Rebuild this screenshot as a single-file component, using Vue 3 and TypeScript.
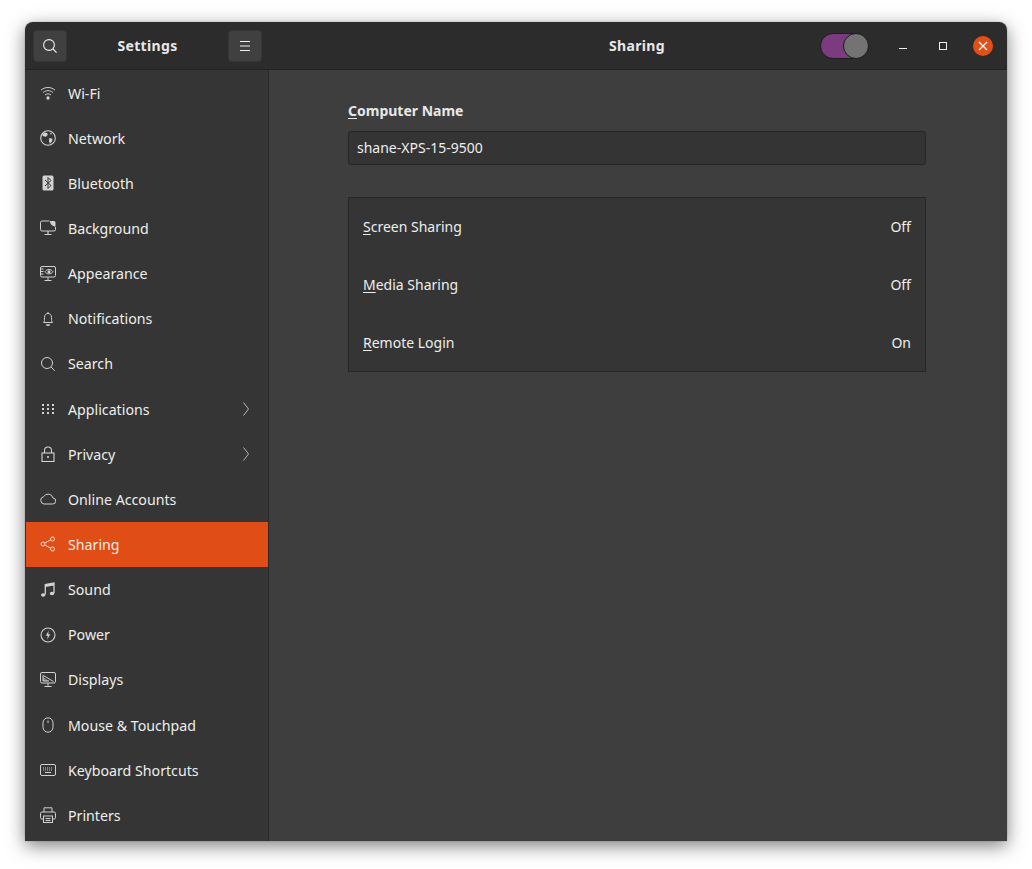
<script setup lang="ts">
interface Item { label: string; icon: string; arrow?: boolean; active?: boolean }
const items: Item[] = [
  { label: 'Wi-Fi', icon: 'wifi' },
  { label: 'Network', icon: 'network' },
  { label: 'Bluetooth', icon: 'bluetooth' },
  { label: 'Background', icon: 'background' },
  { label: 'Appearance', icon: 'appearance' },
  { label: 'Notifications', icon: 'bell' },
  { label: 'Search', icon: 'search' },
  { label: 'Applications', icon: 'apps', arrow: true },
  { label: 'Privacy', icon: 'lock', arrow: true },
  { label: 'Online Accounts', icon: 'cloud' },
  { label: 'Sharing', icon: 'share', active: true },
  { label: 'Sound', icon: 'music' },
  { label: 'Power', icon: 'power' },
  { label: 'Displays', icon: 'display' },
  { label: 'Mouse & Touchpad', icon: 'mouse' },
  { label: 'Keyboard Shortcuts', icon: 'keyboard' },
  { label: 'Printers', icon: 'printer' },
]
const shares = [
  { key: 'S', rest: 'creen Sharing', state: 'Off' },
  { key: 'M', rest: 'edia Sharing', state: 'Off' },
  { key: 'R', rest: 'emote Login', state: 'On' },
]
</script>

<template>
  <div class="page">
    <div class="window">
      <header class="titlebar">
        <div class="tb-left">
          <button class="tb-btn search-btn" aria-label="Search">
            <svg width="16" height="16" viewBox="0 0 16 16" fill="none" stroke="#eee" stroke-width="1.100"><circle cx="7" cy="7" r="5.400"/><path d="M11 11l3.600 3.600"/></svg>
          </button>
          <span class="tb-title">Settings</span>
          <button class="tb-btn" aria-label="Menu">
            <svg width="16" height="16" viewBox="0 0 16 16" stroke="#eee" stroke-width="1"><path d="M3 3.500h10M3 8h10M3 12.500h10"/></svg>
          </button>
        </div>
        <div class="tb-right">
          <span class="tb-title center">Sharing</span>
          <div class="win-controls">
            <div class="toggle"><span class="knob"></span></div>
            <svg class="wc min" width="16" height="16" viewBox="0 0 16 16" stroke="#eee" stroke-width="1"><path d="M4 10.500h8"/></svg>
            <svg class="wc max" width="16" height="16" viewBox="0 0 16 16" fill="none" stroke="#eee" stroke-width="1"><rect x="4.500" y="4.500" width="7" height="7"/></svg>
            <div class="close">
              <svg width="10" height="10" viewBox="0 0 10 10" stroke="#fff" stroke-width="1.200"><path d="M1 1l8 8M9 1l-8 8"/></svg>
            </div>
          </div>
        </div>
      </header>
      <div class="body">
        <aside class="sidebar">
          <div v-for="it in items" :key="it.label" class="row" :class="{ active: it.active }">
            <svg class="ic" width="16" height="16" viewBox="0 0 16 16" fill="none" stroke="currentColor" stroke-width="1">
              <template v-if="it.icon === 'wifi'">
                <path d="M1 5.200C5 1.600 11 1.600 15 5.200M3 7.600c3-2.600 7-2.600 10 0M5 10c1.800-1.500 4.200-1.500 6 0"/>
                <circle cx="8" cy="13" r="1.700" fill="currentColor" stroke="none"/>
              </template>
              <template v-else-if="it.icon === 'network'">
                <circle cx="8" cy="8" r="7.300" stroke-width="1.100"/>
                <path d="M4.500 2.500l2.500.5.800 1.800-1.800 1.900-2.700-.5-1.300-1.400zM9.200 8l3.300.8-.5 2.700-2.200 2.200-.8-2.400zM10 2.500l2 1.200-1.200 1.300z" fill="currentColor" stroke="none"/>
              </template>
              <template v-else-if="it.icon === 'bluetooth'">
                <rect x="2.500" y="0.500" width="11" height="15" rx="1.500" fill="currentColor" stroke="none"/>
                <path d="M5 5l6 5.500-3 3V2.500l3 3L5 11" stroke="#353535"/>
              </template>
              <template v-else-if="it.icon === 'background'">
                <path d="M9.500 1H2a1.500 1.500 0 0 0-1.500 1.500v7A1.500 1.500 0 0 0 2 11h12a1.500 1.500 0 0 0 1.500-1.500V7"/>
                <path d="M10 1h4a1.500 1.500 0 0 1 1.500 1.500V6.500C12.500 6.500 10 4 10 1z" fill="currentColor" stroke="none"/>
                <path d="M8 11v3M4.500 14.500h7" stroke-width="1.200"/>
              </template>
              <template v-else-if="it.icon === 'appearance'">
                <rect x="0.500" y="0.500" width="15" height="10.500" rx="1.500"/>
                <path d="M5 5.700C7 2.800 11 2.800 13 5.700 11 8.600 7 8.600 5 5.700z"/>
                <circle cx="9" cy="5.700" r="1.500" fill="currentColor" stroke="none"/>
                <path d="M1 3h2.500M1 5.500h2.500M1 8h2.500M8 11v3M4.500 14.500h7"/>
              </template>
              <template v-else-if="it.icon === 'bell'">
                <path d="M3.500 11.500c1-1 1-2.500 1-5C4.500 4 6 2.500 8 2.500S11.500 4 11.500 6.500c0 2.500 0 4 1 5zM8 1v1.500"/>
                <path d="M6.300 13.500c.8 1 2.600 1 3.400 0" stroke-width="1.400"/>
              </template>
              <template v-else-if="it.icon === 'search'">
                <circle cx="7" cy="7" r="5.500"/><path d="M11 11l3.800 3.800"/>
              </template>
              <template v-else-if="it.icon === 'apps'">
                <g fill="currentColor" stroke="none">
                  <rect x="2" y="3" width="2" height="2"/><rect x="7" y="3" width="2" height="2"/><rect x="12" y="3" width="2" height="2"/>
                  <rect x="2" y="7" width="2" height="2"/><rect x="7" y="7" width="2" height="2"/><rect x="12" y="7" width="2" height="2"/>
                  <rect x="2" y="11" width="2" height="2"/><rect x="7" y="11" width="2" height="2"/><rect x="12" y="11" width="2" height="2"/>
                </g>
              </template>
              <template v-else-if="it.icon === 'lock'">
                <rect x="2" y="7" width="12" height="8.500" stroke-width="1.100"/>
                <path d="M4.500 7V4.500a3.500 3.500 0 0 1 7 0V7" stroke-width="1.100"/>
                <circle cx="8" cy="11" r="1.100" fill="currentColor" stroke="none"/>
              </template>
              <template v-else-if="it.icon === 'cloud'">
                <path d="M4 13h8.500a3 3 0 0 0 .5-6 5 5 0 0 0-9.300-1.300A3.700 3.700 0 0 0 4 13z"/>
              </template>
              <template v-else-if="it.icon === 'share'">
                <circle cx="3" cy="8" r="2"/><circle cx="12.500" cy="3" r="2"/><circle cx="12.500" cy="13" r="2"/>
                <path d="M4.800 7l5.900-3.100M4.800 9l5.900 3.100"/>
              </template>
              <template v-else-if="it.icon === 'music'">
                <path d="M5.300 12.500V2.500L14 1v10" stroke-width="1.300"/>
                <path d="M5.300 2.500L14 1v2.500L5.300 5z" fill="currentColor" stroke="none"/>
                <ellipse cx="3.200" cy="13" rx="2.200" ry="1.800" fill="currentColor" stroke="none"/>
                <ellipse cx="12" cy="11.500" rx="2.200" ry="1.800" fill="currentColor" stroke="none"/>
              </template>
              <template v-else-if="it.icon === 'power'">
                <circle cx="8" cy="8" r="7" stroke-width="1.100"/>
                <path d="M8.800 3.500L5.800 8.800h2l-.6 3.700 3-5.300h-2z" fill="currentColor" stroke="none"/>
              </template>
              <template v-else-if="it.icon === 'display'">
                <rect x="0.500" y="0.500" width="15" height="10.500" rx="1.500"/>
                <path d="M2.500 3l11 6.500M3 4v5h6M8 11v3M4.500 14.500h7"/>
                <path d="M3 9V5l6 4z" fill="currentColor" fill-opacity=".5" stroke="none"/>
              </template>
              <template v-else-if="it.icon === 'mouse'">
                <rect x="3" y="0.800" width="10" height="14.400" rx="5"/>
                <path d="M8 3.500v2.500" stroke-width="1"/>
              </template>
              <template v-else-if="it.icon === 'keyboard'">
                <rect x="0.500" y="2.500" width="15" height="11" rx="1.500"/>
                <path d="M3 6h10M3 8h10" stroke-dasharray="1 1" stroke-width="1.100"/>
                <path d="M5 10.500h6" stroke-width="1.100"/>
              </template>
              <template v-else>
                <path d="M4 5V.8h8V5"/>
                <path d="M3.500 12H2a1.500 1.500 0 0 1-1.500-1.500v-4A1.500 1.500 0 0 1 2 5h12a1.500 1.500 0 0 1 1.500 1.500v4A1.500 1.500 0 0 1 14 12h-1.500"/>
                <rect x="3.500" y="9" width="9" height="6.500"/>
                <path d="M5.500 11.500h5M5.500 13.500h5"/>
              </template>
            </svg>
            <span class="label">{{ it.label }}</span>
            <svg v-if="it.arrow" class="chev" width="8" height="16" viewBox="0 0 8 16" fill="none" stroke="#b5b5b5" stroke-width="1"><path d="M1.500 1.500L6.500 8l-5 6.500"/></svg>
          </div>
        </aside>
        <main class="content">
          <div class="column">
            <label class="field-label"><u>C</u>omputer Name</label>
            <div class="entry">shane-XPS-15-9500</div>
            <div class="panel">
              <div v-for="s in shares" :key="s.key" class="share-row">
                <span><u>{{ s.key }}</u>{{ s.rest }}</span>
                <span>{{ s.state }}</span>
              </div>
            </div>
          </div>
        </main>
      </div>
    </div>
  </div>
</template>

<style>
html, body { margin: 0; background: #fff; }
</style>

<style scoped>
.page {
  width: 1032px;
  height: 869px;
  box-sizing: border-box;
  padding: 22px 25px 28px;
  overflow: hidden;
  font-family: "Noto Sans", "Open Sans", sans-serif;
  font-size: 14px;
  color: #eeeeec;
}
.window {
  height: 819px;
  display: flex;
  flex-direction: column;
  border-radius: 8px 8px 0 0;
  overflow: hidden;
  box-shadow: 0 5px 18px rgba(0, 0, 0, 0.5), 0 0 1px rgba(0, 0, 0, 0.6);
}
.titlebar {
  height: 47px;
  flex: none;
  display: flex;
  background: #2c2c2c;
  border-bottom: 1px solid #232323;
}
.tb-left {
  width: 244px;
  box-sizing: border-box;
  padding: 0 7px 0 8px;
  display: flex;
  align-items: center;
  justify-content: space-between;
}
.tb-btn {
  width: 34px;
  height: 32px;
  padding: 0;
  display: flex;
  align-items: center;
  justify-content: center;
  background: #404040;
  border: 1px solid #363636;
  border-radius: 4px;
}
.tb-title {
  font-weight: 700;
  font-size: 14px;
  letter-spacing: 0.35px;
  color: #e8e8e8;
}
.tb-right {
  flex: 1;
  position: relative;
  display: flex;
  align-items: center;
  justify-content: center;
  padding-right: 2px;
}
.win-controls {
  position: absolute;
  right: 14px;
  top: 0;
  bottom: 0;
  display: flex;
  align-items: center;
}
.toggle {
  width: 49px;
  height: 26px;
  box-sizing: border-box;
  border-radius: 13px;
  background: #7a3b7f;
  border: 1px solid #1c1c1c;
  position: relative;
  margin-right: 26px;
}
.knob {
  position: absolute;
  right: -1px;
  top: -1px;
  width: 26px;
  height: 26px;
  box-sizing: border-box;
  border-radius: 50%;
  background: #737373;
  border: 1px solid #1c1c1c;
}
.min { margin-right: 24px; }
.max { margin-right: 22px; }
.close {
  width: 20px;
  height: 20px;
  border-radius: 50%;
  background: #e2501a;
  display: flex;
  align-items: center;
  justify-content: center;
}
.body {
  flex: 1;
  display: flex;
  min-height: 0;
}
.sidebar {
  width: 243px;
  flex: none;
  box-sizing: content-box;
  background: #353535;
  border-right: 1px solid #2a2a2a;
  overflow: hidden;
  padding-top: 0.5px;
}
.row {
  height: 45.15px;
  display: flex;
  align-items: center;
  padding-left: 15px;
  color: #d2d2d2;
  font-size: 14.2px;
}
.row .label { margin-left: 12px; color: #eeeeec; }
.row.active { background: #e14d16; margin-left: 1px; padding-left: 14px; color: #f7e0d6; }
.ic { flex: none; }
.chev { margin-left: auto; margin-right: 18px; }
.content {
  flex: 1;
  background: #3e3e3e;
  display: flex;
  justify-content: center;
  padding-right: 2px;
}
.column {
  width: 578px;
  padding-top: 30px;
}
.field-label {
  display: block;
  font-weight: 700;
  font-size: 14px;
  line-height: 22px;
  color: #e8e8e8;
  margin-bottom: 9px;
}
.entry {
  height: 34px;
  box-sizing: border-box;
  border: 1px solid #262626;
  border-radius: 3px;
  background: #343434;
  padding: 0 8px 1px;
  display: flex;
  align-items: center;
}
.panel {
  margin-top: 32px;
  border: 1px solid #262626;
  background: #353535;
  box-sizing: border-box;
  height: 175px;
}
.share-row {
  height: 58px;
  box-sizing: border-box;
  padding: 0 14px 1px;
  display: flex;
  align-items: center;
  justify-content: space-between;
}
u { text-underline-offset: 2px; text-decoration-thickness: 1px; }
</style>
